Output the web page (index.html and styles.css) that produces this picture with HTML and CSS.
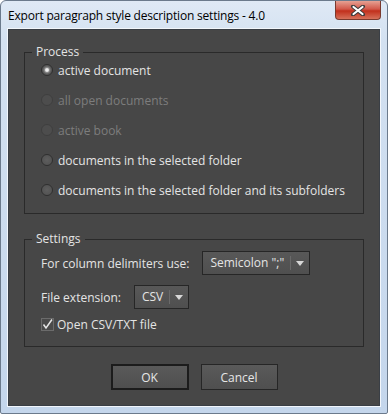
FILE: index.html
```html
<!DOCTYPE html>
<html lang="en">

<head>
    <meta charset="UTF-8">
    <meta name="viewport" content="width=device-width, initial-scale=1.0">
    <title>Export paragraph style description settings</title>

    <!-- Custom style. -->
    <link rel="stylesheet" href="styles.css">
</head>

<body>
    <div class="window">
        <div class="titlebar">
            <span class="title">Export paragraph style description settings - 4.0</span>
            <div class="close">
                <svg width="16" height="11" viewBox="0 0 16 11">
                    <path d="M3 1.5 L13 9.5 M13 1.5 L3 9.5" stroke="#3b3b3b" stroke-width="4" stroke-linecap="round" />
                    <path d="M3.5 2 L12.5 9 M12.5 2 L3.5 9" stroke="#ffffff" stroke-width="2.2" stroke-linecap="round" />
                </svg>
            </div>
        </div>

        <main class="panel">
            <fieldset class="group group_process">
                <legend>Process</legend>
                <label class="radio_row">
                    <span class="radio radio_checked"></span>
                    <span>active document</span>
                </label>
                <label class="radio_row radio_disabled">
                    <span class="radio"></span>
                    <span>all open documents</span>
                </label>
                <label class="radio_row radio_disabled">
                    <span class="radio"></span>
                    <span>active book</span>
                </label>
                <label class="radio_row">
                    <span class="radio"></span>
                    <span>documents in the selected folder</span>
                </label>
                <label class="radio_row">
                    <span class="radio"></span>
                    <span>documents in the selected folder and its subfolders</span>
                </label>
            </fieldset>

            <fieldset class="group group_settings">
                <legend>Settings</legend>
                <div class="field_row">
                    <span class="field_label">For column delimiters use:</span>
                    <div class="select">
                        <span class="select_value">Semicolon ";"</span>
                        <span class="select_arrow"></span>
                    </div>
                </div>
                <div class="field_row field_row_last">
                    <span class="field_label">File extension:</span>
                    <div class="select">
                        <span class="select_value">CSV</span>
                        <span class="select_arrow"></span>
                    </div>
                </div>
                <label class="check_row">
                    <span class="checkbox">
                        <svg width="13" height="13" viewBox="0 0 13 13">
                            <path d="M2.5 6.5 L5 10 L11 1.5" fill="none" stroke="#e6e6e6" stroke-width="1.5" />
                        </svg>
                    </span>
                    <span>Open CSV/TXT file</span>
                </label>
            </fieldset>

            <div class="buttons">
                <div class="button button_default">OK</div>
                <div class="button">Cancel</div>
            </div>
        </main>
    </div>
</body>

</html>
```

FILE: styles.css
```css
body {
    margin: 0;
    font-family: "Open Sans", "Noto Sans", sans-serif;
    background-color: white;
}

.window {
    width: 388px;
    height: 414px;
    box-sizing: border-box;
    border: 1px solid #6b7a8c;
    border-radius: 6px 6px 2px 2px;
    background: linear-gradient(to bottom, #dfe9f5 0, #d3e1f1 40px, #c4d6ec 100%);
    display: flex;
    flex-direction: column;
    padding: 0 7px 7px 7px;
}

.titlebar {
    height: 28px;
    display: flex;
    align-items: flex-start;
    justify-content: space-between;
}

.title {
    font-size: 12px;
    color: #000;
    margin-top: 6px;
    letter-spacing: -0.2px;
}

.close {
    width: 44px;
    height: 18px;
    margin-right: -1px;
    border: 1px solid #7a3a2e;
    border-top: none;
    border-radius: 0 0 4px 4px;
    background: linear-gradient(to bottom, #e6a193 0, #d2584a 45%, #c1301c 55%, #d6715a 100%);
    display: flex;
    justify-content: center;
    align-items: center;
}

.panel {
    flex: 1;
    background-color: #474747;
    border: 1px solid #3a3f46;
    box-shadow: 0 0 0 1px #f2f6fb;
    display: flex;
    flex-direction: column;
    padding: 14px 15px 0 15px;
    color: #e4e4e4;
    font-size: 12px;
}

.group {
    margin: 0;
    padding: 0 0 0 16px;
    border: 1px solid #2a2a2a;
}

.group legend {
    padding: 0 4px 0 4px;
    margin-left: -9px;
    line-height: 16px;
    font-size: 12px;
    color: #e4e4e4;
}

.group_process {
    height: 170px;
    box-sizing: border-box;
    display: flex;
    flex-direction: column;
    gap: 10px;
    padding-top: 0;
}

.radio_row {
    height: 20px;
    display: flex;
    align-items: center;
    gap: 5px;
}

.radio {
    width: 10px;
    height: 10px;
    border-radius: 50%;
    border: 1px solid #2f2f2f;
    background: radial-gradient(circle, #5e5e5e 0, #555 60%);
}

.radio_checked {
    background: radial-gradient(circle, #ffffff 0, #e0e0e0 1.5px, #8a8a8a 2.5px, #5a5a5a 4px, #525252 100%);
}

.radio_disabled {
    color: #7d7d7d;
}

.radio_disabled .radio {
    border-color: #3f3f3f;
    background: #4d4d4d;
}

.group_settings {
    margin-top: 17px;
    height: 116px;
    box-sizing: border-box;
    display: flex;
    flex-direction: column;
    padding-top: 4px;
}

.field_row {
    display: flex;
    align-items: center;
    height: 24px;
    margin-bottom: 10px;
}

.field_row_last {
    margin-bottom: 6px;
}

.field_label {
    margin-right: 13px;
}

.select {
    height: 22px;
    border: 1px solid #262626;
    background: linear-gradient(to bottom, #585858, #4f4f4f);
    display: flex;
    align-items: center;
}

.select_value {
    padding: 0 6px 0 7px;
    height: 14px;
    line-height: 14px;
    border-right: 1px solid #6a6a6a;
}

.select_arrow {
    width: 0;
    height: 0;
    margin: 0 5px 0 5px;
    border-left: 4px solid transparent;
    border-right: 4px solid transparent;
    border-top: 5px solid #d8d8d8;
}

.check_row {
    display: flex;
    align-items: center;
    gap: 3px;
    height: 18px;
}

.checkbox {
    width: 13px;
    height: 13px;
    display: flex;
    background: #4a4a4a;
    border: 1px solid #6b6b6b;
    box-sizing: border-box;
}

.checkbox svg {
    margin: -1px;
}

.buttons {
    display: flex;
    justify-content: center;
    gap: 12px;
    margin-top: 17px;
}

.button {
    width: 77px;
    height: 26px;
    box-sizing: border-box;
    border: 1px solid #262626;
    background: linear-gradient(to bottom, #5a5a5a, #4f4f4f);
    display: flex;
    justify-content: center;
    align-items: center;
    color: #e6e6e6;
    font-size: 12px;
}

.button_default {
    width: 78px;
    border: 2px solid #1c1c1c;
}
```
